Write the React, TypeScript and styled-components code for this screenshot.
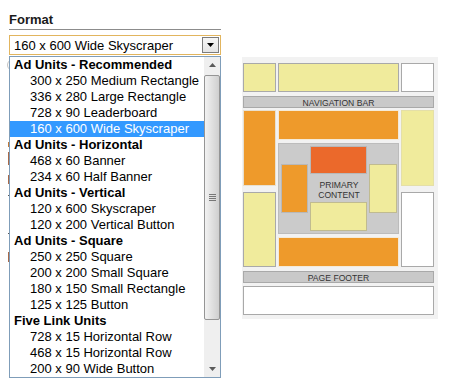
import React from 'react';
import styled, { createGlobalStyle } from 'styled-components';

const GlobalStyle = createGlobalStyle`
    body {
        margin: 0;
        background: #ffffff;
        font-family: 'Liberation Sans', Arial, sans-serif;
    }
`;

type Option = { label: string; group?: boolean; selected?: boolean };

const options: Option[] = [
    { label: 'Ad Units - Recommended', group: true },
    { label: '300 x 250 Medium Rectangle' },
    { label: '336 x 280 Large Rectangle' },
    { label: '728 x 90 Leaderboard' },
    { label: '160 x 600 Wide Skyscraper', selected: true },
    { label: 'Ad Units - Horizontal', group: true },
    { label: '468 x 60 Banner' },
    { label: '234 x 60 Half Banner' },
    { label: 'Ad Units - Vertical', group: true },
    { label: '120 x 600 Skyscraper' },
    { label: '120 x 200 Vertical Button' },
    { label: 'Ad Units - Square', group: true },
    { label: '250 x 250 Square' },
    { label: '200 x 200 Small Square' },
    { label: '180 x 150 Small Rectangle' },
    { label: '125 x 125 Button' },
    { label: 'Five Link Units', group: true },
    { label: '728 x 15 Horizontal Row' },
    { label: '468 x 15 Horizontal Row' },
    { label: '200 x 90 Wide Button' },
];

// bits of the form underneath that peek out left of the open list
const peeks = [
    { top: 142, height: 5, color: '#c07a3a' },
    { top: 152, height: 13, color: '#a86a4a' },
    { top: 175, height: 9, color: '#a86a4a' },
    { top: 195, height: 1, color: '#555555' },
    { top: 233, height: 1, color: '#555555' },
    { top: 252, height: 10, color: '#a86a4a' },
];

export default function App() {
    return (
        <Page>
            <GlobalStyle />
            <FormColumn>
                <Heading>Format</Heading>
                <SelectWrap>
                    <SelectBox>
                        <SelectValue>160 x 600 Wide Skyscraper</SelectValue>
                        <DropButton>
                            <svg width="7" height="4" viewBox="0 0 7 4">
                                <path d="M0 0h7L3.5 4z" fill="#000" />
                            </svg>
                        </DropButton>
                    </SelectBox>
                    <Behind>
                        <Radio />
                        {peeks.map((p, i) => (
                            <Peek key={i} style={{ top: p.top - 55, height: p.height, background: p.color }} />
                        ))}
                    </Behind>
                    <ListBox>
                        <Options>
                            {options.map((o) => (
                                <Row key={o.label} $group={o.group} $selected={o.selected}>
                                    {o.label}
                                </Row>
                            ))}
                        </Options>
                        <ScrollBar>
                            <ArrowButton>
                                <svg width="7" height="4" viewBox="0 0 7 4">
                                    <path d="M0 4h7L3.5 0z" fill="#5a5a5a" />
                                </svg>
                            </ArrowButton>
                            <Track>
                                <Thumb>
                                    <Grip />
                                    <Grip />
                                    <Grip />
                                    <Grip />
                                </Thumb>
                            </Track>
                            <ArrowButton>
                                <svg width="7" height="4" viewBox="0 0 7 4">
                                    <path d="M0 0h7L3.5 4z" fill="#5a5a5a" />
                                </svg>
                            </ArrowButton>
                        </ScrollBar>
                    </ListBox>
                </SelectWrap>
            </FormColumn>
            <Preview>
                <LayoutDiagram />
            </Preview>
        </Page>
    );
}

const LayoutDiagram = () => {
    const yellow = '#f0eb9c';
    const orange = '#ee9a2b';
    const red = '#eb692b';
    const grey = '#cbcbcb';
    const line = '#a9a9a9';
    return (
        <svg width="196" height="262" viewBox="0 0 196 262">
            <rect x="0" y="0" width="196" height="262" fill="#f2f2f2" />
            <g stroke={line} strokeWidth="1">
                <rect x="1.5" y="6.5" width="32" height="28" fill={yellow} />
                <rect x="36.5" y="6.5" width="120" height="28" fill={yellow} />
                <rect x="159.5" y="6.5" width="32" height="28" fill="#ffffff" />
                <rect x="1.5" y="39.5" width="190" height="11" fill="#c9c9c9" />
                <rect x="1.5" y="53.5" width="32" height="75" fill={orange} stroke="#e8e0d0" />
                <rect x="36.5" y="53.5" width="120" height="29" fill={orange} stroke="#f4ead8" />
                <rect x="159.5" y="53.5" width="32" height="75" fill={yellow} stroke="#e4dfa8" />
                <rect x="36.5" y="86.5" width="120" height="90" fill={grey} stroke="#bcbcbc" />
                <rect x="68.5" y="89.5" width="56" height="27" fill={red} stroke="#b8b8b8" />
                <rect x="39.5" y="107.5" width="26" height="48" fill={orange} stroke="#b8b8b8" />
                <rect x="127.5" y="107.5" width="27" height="48" fill={yellow} stroke="#c0bb90" />
                <rect x="68.5" y="145.5" width="56" height="28" fill={yellow} stroke="#c0bb90" />
                <rect x="1.5" y="135.5" width="32" height="74" fill={yellow} />
                <rect x="159.5" y="135.5" width="32" height="74" fill="#ffffff" />
                <rect x="36.5" y="180.5" width="120" height="29" fill={orange} stroke="#f4ead8" />
                <rect x="1.5" y="214.5" width="190" height="11" fill="#c9c9c9" />
                <rect x="1.5" y="229.5" width="190" height="28" fill="#ffffff" />
            </g>
            <DiagramText x="96.5" y="48.6">NAVIGATION BAR</DiagramText>
            <DiagramText x="97" y="130.5">PRIMARY</DiagramText>
            <DiagramText x="97" y="140.5">CONTENT</DiagramText>
            <DiagramText x="96.5" y="223.6">PAGE FOOTER</DiagramText>
        </svg>
    );
};

const Page = styled.div`
    position: relative;
    display: flex;
    align-items: flex-start;
    width: 450px;
    height: 391px;
    overflow: hidden;
`;

const FormColumn = styled.div`
    width: 212px;
    margin-left: 9px;
`;

const Heading = styled.div`
    padding-top: 12px;
    padding-bottom: 1px;
    font-size: 13px;
    line-height: 16px;
    font-weight: bold;
    color: #1a1a1a;
    border-bottom: 1px solid #8c8c8c;
`;

const SelectWrap = styled.div`
    position: relative;
    margin-top: 5px;
`;

const SelectBox = styled.div`
    display: flex;
    align-items: center;
    justify-content: space-between;
    height: 20px;
    box-sizing: border-box;
    border: 1px solid #e2b55e;
    padding: 0 1px 0 4px;
`;

const SelectValue = styled.span`
    font-size: 13px;
    line-height: 18px;
    padding-top: 1px;
    color: #000000;
`;

const DropButton = styled.span`
    display: flex;
    align-items: center;
    justify-content: center;
    width: 17px;
    height: 16px;
    box-sizing: border-box;
    border: 1px solid #7c7c7c;
    background: linear-gradient(#f6f6f6, #e4e4e4);
`;

const Behind = styled.div`
    position: absolute;
    left: -9px;
    top: 20px;
    width: 12px;
    height: 300px;
`;

const Radio = styled.div`
    position: absolute;
    left: 7px;
    top: 4px;
    width: 12px;
    height: 12px;
    box-sizing: border-box;
    border: 1px solid #c4c4c4;
    border-radius: 50%;
`;

const Peek = styled.div`
    position: absolute;
    left: 8px;
    width: 1px;
`;

const ListBox = styled.div`
    position: absolute;
    top: 21px;
    left: 0;
    width: 212px;
    height: 322px;
    box-sizing: border-box;
    border: 1px solid #7f9db9;
    background: #ffffff;
    display: flex;
`;

const Options = styled.div`
    width: 194px;
    display: flex;
    flex-direction: column;
`;

const Row = styled.div<{ $group?: boolean; $selected?: boolean }>`
    height: 16px;
    font-size: 13px;
    line-height: 16px;
    white-space: nowrap;
    padding-left: ${(p) => (p.$group ? '4px' : '20px')};
    font-weight: ${(p) => (p.$group ? 'bold' : 'normal')};
    color: ${(p) => (p.$selected ? '#ffffff' : '#000000')};
    background: ${(p) => (p.$selected ? '#3399ff' : 'transparent')};
`;

const ScrollBar = styled.div`
    width: 16px;
    display: flex;
    flex-direction: column;
    background: #efefef;
`;

const ArrowButton = styled.div`
    height: 16px;
    display: flex;
    align-items: center;
    justify-content: center;
`;

const Track = styled.div`
    flex: 1;
    padding-top: 2px;
`;

const Thumb = styled.div`
    height: 245px;
    box-sizing: border-box;
    border: 1px solid #959595;
    border-radius: 2px;
    background: linear-gradient(to right, #f2f2f2 0%, #e2e2e2 45%, #cfcfcf 100%);
    display: flex;
    flex-direction: column;
    align-items: center;
    justify-content: center;
    gap: 1px;
`;

const Grip = styled.div`
    width: 7px;
    height: 1px;
    background: #777777;
`;

const Preview = styled.div`
    margin-left: 21px;
    margin-top: 57px;
    display: flex;
`;

const DiagramText = styled.text`
    font-family: 'Liberation Sans', Arial, sans-serif;
    font-size: 8.6px;
    fill: #333333;
    text-anchor: middle;
`;
